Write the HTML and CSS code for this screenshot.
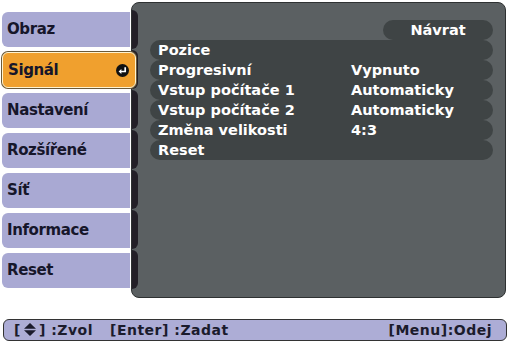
FILE: index.html
```html
<!DOCTYPE html>
<html lang="cs">
<head>
    <meta charset="UTF-8">
    <title>Signál</title>
    <link rel="stylesheet" href="styles.css">
</head>
<body>
    <div class="main">
        <div class="tabs">
            <div class="tab">Obraz</div>
            <div class="tab active">
                <span>Signál</span>
                <svg class="enter" width="13" height="13" viewBox="0 0 13 13">
                    <circle cx="6.5" cy="6.5" r="6.5" fill="#111"/>
                    <path d="M9.2 3.3 V7.5 H5" stroke="#fff" stroke-width="1.7" fill="none"/>
                    <polygon points="2.6,7.5 5.4,5.1 5.4,9.9" fill="#fff"/>
                </svg>
            </div>
            <div class="tab">Nastavení</div>
            <div class="tab">Rozšířené</div>
            <div class="tab">Síť</div>
            <div class="tab">Informace</div>
            <div class="tab">Reset</div>
        </div>
        <div class="panel">
            <div class="strip">
                <div></div><div></div><div></div><div></div><div></div><div></div><div></div>
            </div>
            <div class="content">
                <div class="back">Návrat</div>
                <div class="rows">
                    <div class="row"><span class="label">Pozice</span><span class="value"></span></div>
                    <div class="row"><span class="label">Progresivní</span><span class="value">Vypnuto</span></div>
                    <div class="row"><span class="label">Vstup počítače 1</span><span class="value">Automaticky</span></div>
                    <div class="row"><span class="label">Vstup počítače 2</span><span class="value">Automaticky</span></div>
                    <div class="row"><span class="label">Změna velikosti</span><span class="value">4:3</span></div>
                    <div class="row"><span class="label">Reset</span><span class="value"></span></div>
                </div>
            </div>
        </div>
    </div>
    <div class="help">
        <div class="keys">
            <span>[<svg class="updown" width="12" height="13" viewBox="0 0 12 13"><polygon points="6,0 12,5.8 0,5.8" fill="#1b1b2c"/><polygon points="0,7.2 12,7.2 6,13" fill="#1b1b2c"/></svg>] :Zvol</span>
            <span>[Enter] :Zadat</span>
        </div>
        <span>[Menu]:Odej</span>
    </div>
</body>
</html>
```

FILE: styles.css
```css
* {
    margin: 0;
    padding: 0;
    box-sizing: border-box;
}
body {
    width: 510px;
    height: 344px;
    background: #fff;
    font-family: "DejaVu Sans", sans-serif;
    font-weight: bold;
    font-size: 15px;
    line-height: 1;
    overflow: hidden;
}
.main {
    display: flex;
    height: 296px;
    margin: 2px 4px 0 2px;
}
.tabs {
    width: 129px;
    padding-top: 10px;
    display: flex;
    flex-direction: column;
    gap: 5px;
}
.tab {
    width: 128px;
    height: 35px;
    padding-left: 5px;
    display: flex;
    align-items: center;
    background: #a9a9d3;
    color: #16162a;
    border-radius: 6px 0 0 6px;
    letter-spacing: -0.4px;
}
.tab.active {
    position: relative;
    z-index: 1;
    width: 134px;
    height: 36px;
    justify-content: space-between;
    padding-right: 6px;
    background: #f0a02e;
    border: 1px solid #fff3d0;
    border-radius: 6px;
    box-shadow: 0 0 0 1px #6b5a3a;
}
.enter {
    display: block;
}
.panel {
    flex: 1;
    display: flex;
    background: #5b6062;
    border: 1px solid #2e3132;
    border-radius: 8px;
    overflow: hidden;
}
.strip {
    width: 6px;
    padding-top: 7px;
    display: flex;
    flex-direction: column;
    gap: 1px;
}
.strip div {
    height: 39px;
    background: #231f27;
    border-radius: 0 6px 6px 0;
}
.content {
    padding: 17px 0 0 12px;
    color: #fff;
    font-size: 14.5px;
}
.back {
    width: 110px;
    height: 20px;
    margin-left: 233px;
    display: flex;
    align-items: center;
    justify-content: center;
    background: #3f4445;
    border-radius: 10px;
}
.row {
    width: 343px;
    height: 20px;
    display: flex;
    align-items: center;
    padding-left: 8px;
    background: #3f4445;
    border-radius: 10px;
}
.label {
    width: 193px;
}
.help {
    height: 22px;
    margin: 21px 3px 0 3px;
    padding: 0 14px 0 10px;
    display: flex;
    align-items: center;
    justify-content: space-between;
    background: #adadd6;
    border: 1px solid #333;
    border-radius: 6px;
    color: #1b1b2c;
    font-size: 14px;
    letter-spacing: 0.5px;
}
.keys {
    display: flex;
    gap: 17px;
}
.updown {
    margin: 0 3px -1px;
}
```
